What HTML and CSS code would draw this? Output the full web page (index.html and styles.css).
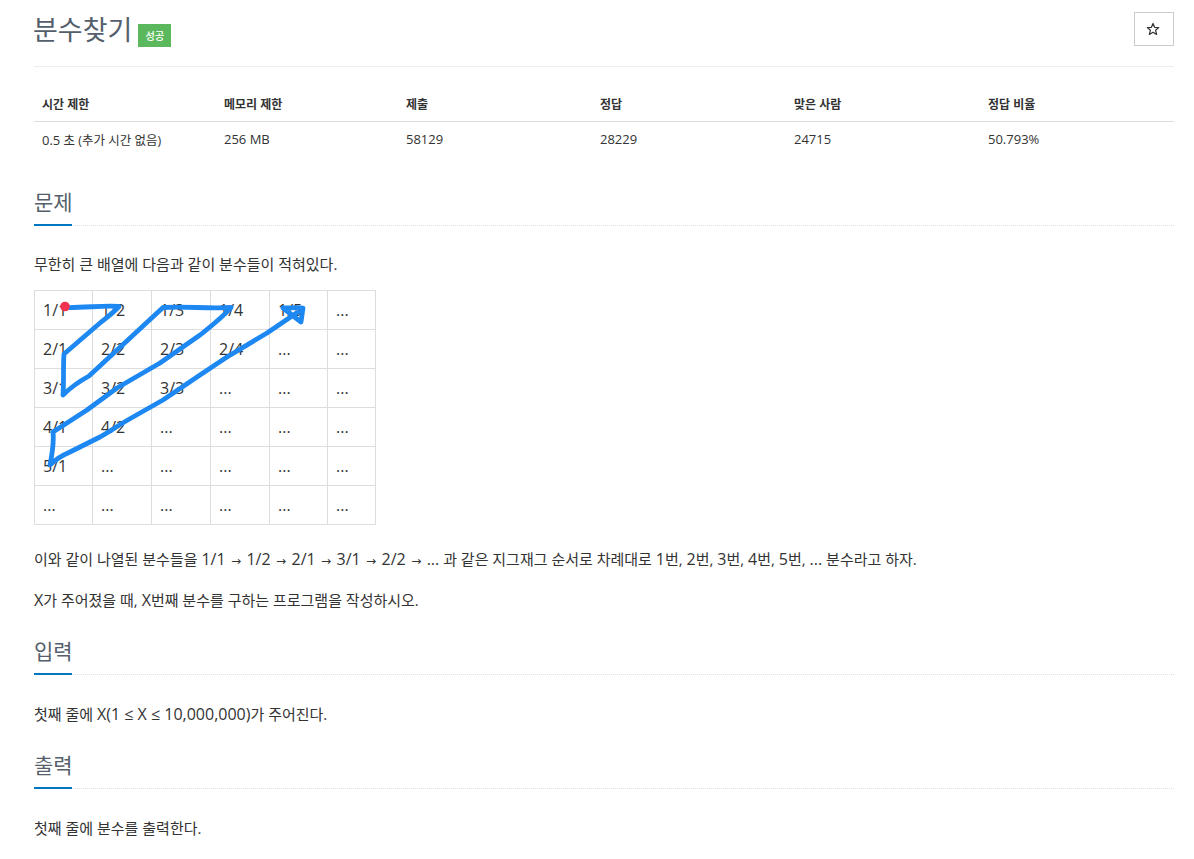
FILE: index.html
```html
<!DOCTYPE html>
<html lang="ko">
<head>
<meta charset="utf-8">
<title>분수찾기</title>
<link rel="stylesheet" href="styles.css">
</head>
<body>
<main class="page">
  <header class="title-bar">
    <div class="title-group">
      <h1 class="title">분수찾기</h1>
      <span class="badge">성공</span>
    </div>
    <button class="star-btn" type="button" aria-label="즐겨찾기">
      <svg class="star" width="14" height="14" viewBox="0 0 14 14"><path d="M7 1.4 8.6 5.3 12.7 5.6 9.6 8.3 10.6 12.4 7 10.2 3.4 12.4 4.4 8.3 1.3 5.6 5.4 5.3Z" fill="none" stroke="#333" stroke-width="1.2" stroke-linejoin="round"/></svg>
    </button>
  </header>

  <table class="info">
    <thead>
      <tr><th class="c1">시간 제한</th><th class="c1">메모리 제한</th><th class="c2">제출</th><th class="c2">정답</th><th class="c2">맞은 사람</th><th>정답 비율</th></tr>
    </thead>
    <tbody>
      <tr><td class="limit"><span class="lat-s">0.5</span> 초 (추가 시간 없음)</td><td>256 MB</td><td>58129</td><td>28229</td><td>24715</td><td>50.793%</td></tr>
    </tbody>
  </table>

  <section class="section first">
    <div class="headline"><h2>문제</h2></div>
    <p class="para">무한히 큰 배열에 다음과 같이 분수들이 적혀있다.</p>
    <div class="grid-wrap">
      <table class="fractions">
        <tr><td class="w1">1/1</td><td class="w2">1/2</td><td class="w2">1/3</td><td class="w2">1/4</td><td class="w1">1/5</td><td class="w3">...</td></tr>
        <tr><td>2/1</td><td>2/2</td><td>2/3</td><td>2/4</td><td>...</td><td>...</td></tr>
        <tr><td>3/1</td><td>3/2</td><td>3/3</td><td>...</td><td>...</td><td>...</td></tr>
        <tr><td>4/1</td><td>4/2</td><td>...</td><td>...</td><td>...</td><td>...</td></tr>
        <tr><td>5/1</td><td>...</td><td>...</td><td>...</td><td>...</td><td>...</td></tr>
        <tr><td>...</td><td>...</td><td>...</td><td>...</td><td>...</td><td>...</td></tr>
      </table>
      <svg class="scribble" width="342" height="235" viewBox="34 290 342 235">
        <path d="M65 307.5C85 308 105 305 119 306.5 112 314 106 318 100 323L64 354C63 368 64 382 63 395 70 388 80 381 89 376L163 307.5C185 306 208 309 231 307.5 222 318 210 327 200 335L160 363 117 388 87 410 53 432C54 442 52 455 50 465 56 459 63 455 70 452L100 437C112 430 122 423 133 417L163 400 200 375 227 357 267 333 298 312M283 308C290 308 297 307 303 308L301 322 283 308" fill="none" stroke="#1e88f2" stroke-width="4.8" stroke-linecap="round" stroke-linejoin="round"/>
        <circle cx="65" cy="306.5" r="4.8" fill="#f4304f"/>
      </svg>
    </div>
    <p class="para after-grid">이와 같이 나열된 분수들을 <span class="lat">1/1</span> <span class="arrow">→</span> <span class="lat">1/2</span> <span class="arrow">→</span> <span class="lat">2/1</span> <span class="arrow">→</span> <span class="lat">3/1</span> <span class="arrow">→</span> <span class="lat">2/2</span> <span class="arrow">→</span> <span class="lat">...</span> 과 같은 지그재그 순서로 차례대로 <span class="lat">1</span>번, <span class="lat">2</span>번, <span class="lat">3</span>번, <span class="lat">4</span>번, <span class="lat">5</span>번, <span class="lat">...</span> 분수라고 하자.</p>
    <p class="para"><span class="lat">X</span>가 주어졌을 때, <span class="lat">X</span>번째 분수를 구하는 프로그램을 작성하시오.</p>
  </section>

  <section class="section">
    <div class="headline"><h2>입력</h2></div>
    <p class="para">첫째 줄에 <span class="lat">X(1 ≤ X ≤ 10,000,000)</span>가 주어진다.</p>
  </section>

  <section class="section">
    <div class="headline"><h2>출력</h2></div>
    <p class="para">첫째 줄에 분수를 출력한다.</p>
  </section>
</main>
</body>
</html>
```

FILE: styles.css
```css
* { box-sizing: border-box; }
html, body { margin: 0; padding: 0; background: #fff; overflow: hidden; }
body {
  font-family: "Open Sans", "Noto Sans CJK KR", sans-serif;
  color: #333;
  font-size: 14px;
  height: 859px;
}
.page { padding: 0 20px 0 34px; }
.title-bar {
  display: flex;
  justify-content: space-between;
  align-items: flex-start;
  height: 67px;
  border-bottom: 1px solid #eee;
  padding-top: 12px;
}
.title-group { display: flex; align-items: flex-start; }
.title { margin: 0 0 0 -1px; font-size: 27px; font-weight: 400; line-height: 36px; color: #555f6b; }
.badge {
  margin: 12px 0 0 6px;
  width: 33px;
  height: 23px;
  background: #5cb85c;
  color: #fff;
  font-size: 10.5px;
  font-weight: 500;
  display: flex;
  align-items: center;
  justify-content: center;
}
.star-btn {
  width: 40px;
  height: 34px;
  background: #fff;
  border: 1px solid #ccc;
  padding: 0;
  display: flex;
  align-items: center;
  justify-content: center;
}
.star { margin-right: 2px; }
.info { width: 100%; border-collapse: collapse; margin-top: 19px; table-layout: fixed; font-size: 13px; }
.info th { height: 35px; padding: 2px 8px 0; text-align: left; font-weight: 700; font-size: 12px; border-bottom: 1px solid #ddd; }
.info td { height: 36px; padding: 0 8px; }
.info td.limit { font-size: 12.5px; }
.lat-s { font-size: 13px; }
.c1 { width: 182px; }
.c2 { width: 194px; }
.section { margin-top: 26px; }
.section.first { margin-top: 30px; }
.headline { border-bottom: 1px dotted #ddd; height: 39px; }
.headline h2 {
  margin: 0;
  display: inline-block;
  height: 39px;
  width: 38px;
  font-size: 21px;
  font-weight: 400;
  line-height: 30px;
  white-space: nowrap;
  color: #555f6b;
  border-bottom: 2px solid #0076c0;
}
.para { margin: 0; font-size: 15px; line-height: 20px; color: #333; }
.lat { font-size: 16px; line-height: 1; }
.arrow { font-family: "DejaVu Sans", sans-serif; font-size: 12px; line-height: 1; margin: 0 1.5px; }
.section .headline + .para { margin-top: 29px; }
.section.first .headline + .para { margin-top: 28px; }
.grid-wrap { position: relative; width: 342px; margin-top: 16px; }
.fractions { border-collapse: collapse; table-layout: fixed; width: 342px; font-size: 16px; color: #333; }
.fractions td { height: 39px; padding: 0 8px 1px; border: 1px solid #ddd; }
.w1 { width: 58px; }
.w2 { width: 59px; }
.w3 { width: 48px; }
.scribble { position: absolute; left: 0; top: 0; }
.after-grid { margin-top: 24px; }
.para.after-grid + .para { margin-top: 21px; }
```
